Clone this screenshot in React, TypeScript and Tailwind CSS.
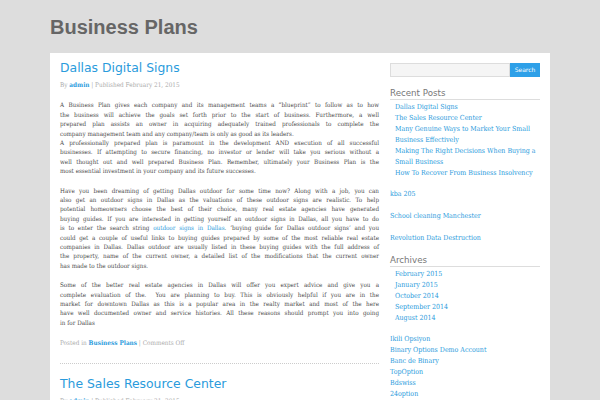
import React from "react";

const blue = "text-[#2a9bdc]";

type Line = React.ReactNode;

function Para({ lines, className }: { lines: Line[]; className?: string }) {
  return (
    <div className={className}>
      {lines.map((l, i) => (
        <div
          key={i}
          className={
            i === lines.length - 1
              ? "text-left whitespace-nowrap"
              : "text-justify [text-align-last:justify] whitespace-nowrap"
          }
        >
          {l}
        </div>
      ))}
    </div>
  );
}

const p1: Line[] = [
  "A Business Plan gives each company and its management teams a “blueprint” to follow as to how",
  "the business will achieve the goals set forth prior to the start of business. Furthermore, a well",
  "prepared plan assists an owner in acquiring adequately trained professionals to complete the",
  "company management team and any company/team is only as good as its leaders.",
];
const p1b: Line[] = [
  "A professionally prepared plan is paramount in the development AND execution of all successful",
  "businesses. If attempting to secure financing, no investor or lender will take you serious without a",
  "well thought out and well prepared Business Plan. Remember, ultimately your Business Plan is the",
  "most essential investment in your company and its future successes.",
];
const p2: Line[] = [
  "Have you been dreaming of getting Dallas outdoor for some time now? Along with a job, you can",
  "also get an outdoor signs in Dallas as the valuations of these outdoor signs are realistic. To help",
  "potential homeowners choose the best of their choice, many real estate agencies have generated",
  "buying guides. If you are interested in getting yourself an outdoor signs in Dallas, all you have to do",
  <>
    is to enter the search string <a className={blue}>outdoor signs in Dallas</a>. ‘buying guide for Dallas outdoor signs’ and you
  </>,
  "could get a couple of useful links to buying guides prepared by some of the most reliable real estate",
  "companies in Dallas. Dallas outdoor are usually listed in these buying guides with the full address of",
  "the property, name of the current owner, a detailed list of the modifications that the current owner",
  "has made to the outdoor signs.",
];
const p3: Line[] = [
  "Some of the better real estate agencies in Dallas will offer you expert advice and give you a",
  "complete evaluation of the.\u00a0 You are planning to buy. This is obviously helpful if you are in the",
  "market for downtown Dallas as this is a popular area in the realty market and most of the here",
  "have well documented owner and service histories. All these reasons should prompt you into going",
  "in for Dallas",
];

const recent = [
  "Dallas Digital Signs",
  "The Sales Resource Center",
  "Many Genuine Ways to Market Your Small",
  "Business Effectively",
  "Making The Right Decisions When Buying a",
  "Small Business",
  "How To Recover From Business Insolvency",
];
const archives = ["February 2015", "January 2015", "October 2014", "September 2014", "August 2014"];
const links = ["Ikili Opsiyon", "Binary Options Demo Account", "Banc de Binary", "TopOption", "Bdswiss", "24option"];

export default function App() {
  return (
    <div className="min-h-screen w-[600px] h-[400px] overflow-hidden bg-[#dddddd]">
      <div className="w-[500px] mx-auto">
        <header className="pt-[15px] h-[53px]">
          <h1 className="font-['Liberation_Sans',Arial,sans-serif] font-bold text-[20px] leading-[24px] text-[#666666]">
            Business Plans
          </h1>
        </header>
        <div className="bg-white min-h-[347px] flex px-[10px] gap-[11px]">
          <main className="w-[319px] pt-[6.4px] font-['DejaVu_Serif_Condensed','DejaVu_Serif',serif] [font-stretch:condensed]">
            <article className="border-b border-dotted border-[#cccccc] pb-[15px]">
              <h2 className={`font-['DejaVu_Sans',Verdana,sans-serif] [font-stretch:normal] text-[12.4px] leading-[18px] ${blue}`}>
                Dallas Digital Signs
              </h2>
              <div className="mt-[2.6px] text-[6.4px] leading-[10px] text-[#aaaaaa]">
                By <a className={`${blue} font-bold`}>admin</a> | Published February 21, 2015
              </div>
              <div className="mt-[10.3px] text-[6.25px] leading-[9.4px] text-[#4a4a4a]">
                <Para lines={p1} />
                <Para lines={p1b} />
                <Para lines={p2} className="mt-[10px]" />
                <Para lines={p3} className="mt-[10px]" />
              </div>
              <div className="mt-[11.2px] text-[6.4px] leading-[10px] text-[#aaaaaa]">
                Posted in <a className={`${blue} font-bold`}>Business Plans</a> | Comments Off
              </div>
            </article>
            <article className="pt-[11px]">
              <h2 className={`font-['DejaVu_Sans',Verdana,sans-serif] [font-stretch:normal] text-[12.4px] leading-[18px] ${blue}`}>
                The Sales Resource Center
              </h2>
              <div className="mt-[2.6px] text-[6.4px] leading-[10px] text-[#aaaaaa]">
                By <a className={`${blue} font-bold`}>admin</a> | Published February 21, 2015
              </div>
            </article>
          </main>
          <aside className="w-[150px] pt-[10px] font-['DejaVu_Serif_Condensed','DejaVu_Serif',serif] [font-stretch:condensed] text-[7px] leading-[11px]">
            <form className="flex h-[14px]">
              <input
                className="flex-1 min-w-0 h-[14px] border border-[#dddddd] bg-[#f5f5f5] outline-none"
                type="text"
              />
              <button
                type="button"
                className="w-[30px] h-[14px] bg-[#2ea0e8] text-white font-['DejaVu_Sans',Verdana,sans-serif] text-[6px] leading-[14px] [font-stretch:normal]"
              >
                Search
              </button>
            </form>
            <h3 className="mt-[10px] font-['DejaVu_Sans',Verdana,sans-serif] [font-stretch:normal] text-[8.7px] leading-[12px] text-[#777777] border-b border-[#dddddd]">
              Recent Posts
            </h3>
            <ul className="mt-[1.5px] pl-[5px]">
              {recent.map((r) => (
                <li key={r} className={blue}>
                  {r}
                </li>
              ))}
            </ul>
            <div className="mt-[10px] flex flex-col gap-[11px]">
              <a className={blue}>kba 205</a>
              <a className={blue}>School cleaning Manchester</a>
              <a className={blue}>Revolution Data Destruction</a>
            </div>
            <h3 className="mt-[10.5px] font-['DejaVu_Sans',Verdana,sans-serif] [font-stretch:normal] text-[8.7px] leading-[12px] text-[#777777] border-b border-[#dddddd]">
              Archives
            </h3>
            <ul className="mt-[1.5px] pl-[5px]">
              {archives.map((r) => (
                <li key={r} className={blue}>
                  {r}
                </li>
              ))}
            </ul>
            <ul className="mt-[10px]">
              {links.map((r) => (
                <li key={r} className={blue}>
                  {r}
                </li>
              ))}
            </ul>
          </aside>
        </div>
      </div>
    </div>
  );
}
